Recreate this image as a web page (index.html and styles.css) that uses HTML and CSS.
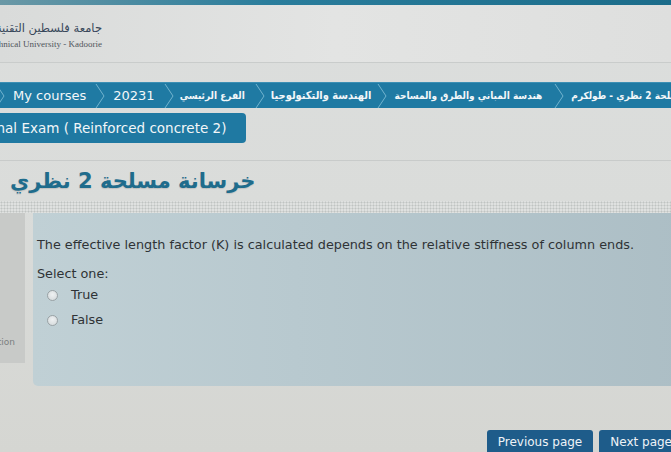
FILE: index.html
```html
<!DOCTYPE html>
<html lang="en">
<head>
<meta charset="utf-8">
<title>Final Exam ( Reinforced concrete 2)</title>
<link rel="stylesheet" href="styles.css">
</head>
<body>
<div class="page">
  <div class="topbar"></div>
  <header class="header">
    <div class="brand">
      <div class="brand-ar" lang="ar">جامعة فلسطين التقنية</div>
      <div class="brand-en">Palestine Technical University - Kadoorie</div>
    </div>
  </header>

  <nav class="crumbs">
    <span class="sep"><svg viewBox="0 0 12 26" width="12" height="26"><polyline points="2,1 10,13 2,25" /></svg></span>
    <span class="crumb">My courses</span>
    <span class="sep"><svg viewBox="0 0 12 26" width="12" height="26"><polyline points="2,1 10,13 2,25" /></svg></span>
    <span class="crumb">20231</span>
    <span class="sep"><svg viewBox="0 0 12 26" width="12" height="26"><polyline points="2,1 10,13 2,25" /></svg></span>
    <span class="crumb ar branch" lang="ar" dir="rtl">الفرع الرئيسي</span>
    <span class="sep"><svg viewBox="0 0 12 26" width="12" height="26"><polyline points="2,1 10,13 2,25" /></svg></span>
    <span class="crumb ar faculty" lang="ar" dir="rtl">الهندسة والتكنولوجيا</span>
    <span class="sep"><svg viewBox="0 0 12 26" width="12" height="26"><polyline points="2,1 10,13 2,25" /></svg></span>
    <span class="crumb ar dept" lang="ar" dir="rtl">هندسة المباني والطرق والمساحة</span>
    <span class="sep"><svg viewBox="0 0 12 26" width="12" height="26"><polyline points="2,1 10,13 2,25" /></svg></span>
    <span class="crumb ar course-crumb" lang="ar" dir="rtl">خرسانة مسلحة 2 نظري - طولكرم</span>
  </nav>

  <div class="tab">Final Exam ( Reinforced concrete 2)</div>

  <div class="rule"></div>

  <h1 class="course" lang="ar" dir="rtl">خرسانة مسلحة 2 نظري</h1>

  <div class="dots"></div>

  <section class="question">
    <div class="info"><span class="info-text">Flag question</span></div>
    <div class="content">
      <p class="qtext">The effective length factor (K) is calculated depends on the relative stiffness of column ends.</p>
      <p class="prompt">Select one:</p>
      <div class="answer">
        <label class="option"><span class="radio"></span><span>True</span></label>
        <label class="option"><span class="radio"></span><span>False</span></label>
      </div>
    </div>
  </section>

  <div class="nav-buttons">
    <button class="btn">Previous page</button>
    <button class="btn">Next page</button>
  </div>
</div>
</body>
</html>
```

FILE: styles.css
```css
html, body {
  margin: 0;
  padding: 0;
}
body {
  width: 671px;
  height: 452px;
  overflow: hidden;
  background: #d6d8d5;
  font-family: "DejaVu Sans", Verdana, sans-serif;
}
.page {
  display: flex;
  flex-direction: column;
  height: 452px;
  background: linear-gradient(180deg, #dcdedd 0%, #dadcda 45%, #d5d6d2 100%);
}
.topbar {
  height: 5px;
  background: linear-gradient(90deg, #6a98a6 0%, #2a7d9c 40%, #1b6c8a 100%);
}
.header {
  height: 57px;
  border-bottom: 1px solid #c9cccb;
  background: linear-gradient(90deg, #d9dbda 0%, #e3e4e3 50%, #dedfde 100%);
  display: flex;
  align-items: flex-start;
}
.brand {
  width: 152px;
  margin-left: -50px;
  margin-top: 15px;
  text-align: right;
  white-space: nowrap;
  color: #4f5356;
}
.brand-ar {
  font-family: "DejaVu Sans", sans-serif;
  font-size: 11.5px;
  line-height: 16px;
  color: #37475a;
}
.brand-en {
  font-family: "Liberation Serif", "Times New Roman", serif;
  font-size: 9px;
  line-height: 12px;
  margin-top: 2px;
  color: #50555b;
}
.crumbs {
  margin-top: 19px;
  height: 26px;
  margin-left: -6px;
  background: #1f7aa3;
  display: flex;
  align-items: center;
  white-space: nowrap;
  border-top: 1px solid #3b8fb4;
  box-sizing: border-box;
}
.sep {
  display: flex;
  height: 26px;
  flex-shrink: 0;
}
.sep svg polyline {
  fill: none;
  stroke: #72b4cf;
  stroke-width: 1;
}
.crumb {
  color: #f3f7f9;
  font-size: 13px;
  line-height: 26px;
  padding: 0 8px 0 7px;
  flex-shrink: 0;
}
.crumb.ar {
  font-family: "DejaVu Sans Condensed", "DejaVu Sans", sans-serif;
  font-size: 10px;
  font-weight: bold;
  padding: 0 11px 0 6px;
}
.crumb.ar.branch {
  padding: 0 9px 0 5px;
}
.crumb.ar.faculty {
  font-size: 11px;
  padding: 0 5px 0 5px;
}
.crumb.ar.dept {
  padding: 0 11px 0 6px;
}
.tab {
  margin-top: 5px;
  margin-left: -20px;
  align-self: flex-start;
  height: 30px;
  line-height: 30px;
  padding: 0 20px 0 6px;
  background: #1f79a2;
  color: #f2f6f8;
  font-size: 13.5px;
  border-radius: 0 4px 4px 0;
  white-space: nowrap;
}
.rule {
  margin-top: 17px;
  height: 1px;
  background: #c8cbca;
}
.course {
  margin: 1px 0 0 10px;
  height: 36px;
  line-height: 38px;
  font-size: 21px;
  font-weight: bold;
  color: #1f6c8c;
  text-align: left;
  align-self: flex-start;
  text-shadow: 0 1px 1px rgba(0, 0, 0, 0.12);
}
.dots {
  margin-top: 3px;
  height: 12px;
  background-color: #dfe1e0;
  background-image: radial-gradient(circle, #bfc3c2 0.9px, transparent 1.1px);
  background-size: 3px 3px;
}
.question {
  display: flex;
  align-items: flex-start;
  gap: 8px;
  margin-left: -75px;
}
.info {
  width: 100px;
  height: 150px;
  background: #c8cac8;
  display: flex;
  align-items: flex-end;
  justify-content: flex-end;
  box-sizing: border-box;
  padding: 0 10px 16px 0;
  flex-shrink: 0;
}
.info-text {
  font-size: 9px;
  color: #7b7f80;
  white-space: nowrap;
}
.content {
  flex: 1;
  height: 173px;
  margin-right: -20px;
  box-sizing: border-box;
  padding: 23px 0 0 4px;
  background: linear-gradient(90deg, #c0d0d5 0%, #b8c9cf 40%, #acbec5 100%);
  border-radius: 0 0 0 5px;
  color: #2f3336;
}
.qtext {
  margin: 0;
  font-size: 12.8px;
  line-height: 18px;
  white-space: nowrap;
}
.prompt {
  margin: 11px 0 0 0;
  font-size: 12.8px;
  line-height: 18px;
}
.answer {
  display: flex;
  flex-direction: column;
  gap: 7px;
  margin-top: 3px;
  padding-left: 10px;
}
.option {
  display: flex;
  align-items: center;
  gap: 13px;
  font-size: 12.8px;
  line-height: 18px;
}
.radio {
  width: 9px;
  height: 9px;
  border-radius: 50%;
  border: 1px solid #9aa2a5;
  background: radial-gradient(circle at 50% 40%, #eef1f2 0%, #d2d7d9 100%);
}
.nav-buttons {
  margin-top: auto;
  display: flex;
  justify-content: flex-end;
  gap: 6px;
  margin-right: -12px;
}
.btn {
  font-family: "DejaVu Sans", Verdana, sans-serif;
  font-size: 12px;
  color: #eef3f7;
  background: #1e5c8a;
  border: none;
  border-radius: 3px 3px 0 0;
  height: 22px;
  padding: 3px 11px 0 11px;
  line-height: 19px;
}
```
